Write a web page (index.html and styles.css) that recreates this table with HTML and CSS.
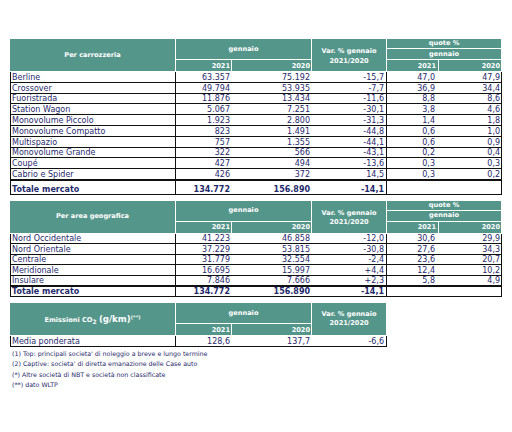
FILE: index.html
```html
<!DOCTYPE html>
<html>

<head>
  <meta name="viewport" content="width=device-width, initial-scale=1.0">
  <link rel="stylesheet" href="styles.css">
</head>

<body>
  <!-- Tabella 1: per carrozzeria -->
  <table class="tab tab1">
    <colgroup>
      <col class="c-lab"><col class="c-y1"><col class="c-y2"><col class="c-var"><col class="c-q1"><col class="c-q2">
    </colgroup>
    <thead>
      <tr class="h1">
        <th rowspan="3">Per carrozzeria</th>
        <th colspan="2" rowspan="2">gennaio</th>
        <th rowspan="3" class="hvar">Var. % gennaio<br>2021/2020</th>
        <th colspan="2">quote %</th>
      </tr>
      <tr class="h2">
        <th colspan="2">gennaio</th>
      </tr>
      <tr class="h3">
        <th class="yr">2021</th><th class="yr">2020</th><th class="yr q1">2021</th><th class="yr">2020</th>
      </tr>
    </thead>
    <tbody>
      <tr><td class="lab">Berline</td><td>63.357</td><td>75.192</td><td class="var">-15,7</td><td class="q1">47,0</td><td class="q2">47,9</td></tr>
      <tr><td class="lab">Crossover</td><td>49.794</td><td>53.935</td><td class="var">-7,7</td><td class="q1">36,9</td><td class="q2">34,4</td></tr>
      <tr><td class="lab">Fuoristrada</td><td>11.876</td><td>13.434</td><td class="var">-11,6</td><td class="q1">8,8</td><td class="q2">8,6</td></tr>
      <tr><td class="lab">Station Wagon</td><td>5.067</td><td>7.251</td><td class="var">-30,1</td><td class="q1">3,8</td><td class="q2">4,6</td></tr>
      <tr><td class="lab">Monovolume Piccolo</td><td>1.923</td><td>2.800</td><td class="var">-31,3</td><td class="q1">1,4</td><td class="q2">1,8</td></tr>
      <tr><td class="lab">Monovolume Compatto</td><td>823</td><td>1.491</td><td class="var">-44,8</td><td class="q1">0,6</td><td class="q2">1,0</td></tr>
      <tr><td class="lab">Multispazio</td><td>757</td><td>1.355</td><td class="var">-44,1</td><td class="q1">0,6</td><td class="q2">0,9</td></tr>
      <tr><td class="lab">Monovolume Grande</td><td>322</td><td>566</td><td class="var">-43,1</td><td class="q1">0,2</td><td class="q2">0,4</td></tr>
      <tr><td class="lab">Coupé</td><td>427</td><td>494</td><td class="var">-13,6</td><td class="q1">0,3</td><td class="q2">0,3</td></tr>
      <tr><td class="lab">Cabrio e Spider</td><td>426</td><td>372</td><td class="var">14,5</td><td class="q1">0,3</td><td class="q2">0,2</td></tr>
      <tr class="tot"><td class="lab">Totale mercato</td><td>134.772</td><td>156.890</td><td class="var">-14,1</td><td class="q1"></td><td class="q2"></td></tr>
    </tbody>
  </table>

  <!-- Tabella 2: per area geografica -->
  <table class="tab tab2">
    <colgroup>
      <col class="c-lab"><col class="c-y1"><col class="c-y2"><col class="c-var"><col class="c-q1"><col class="c-q2">
    </colgroup>
    <thead>
      <tr class="h1">
        <th rowspan="3">Per area geografica</th>
        <th colspan="2" rowspan="2">gennaio</th>
        <th rowspan="3" class="hvar">Var. % gennaio<br>2021/2020</th>
        <th colspan="2">quote %</th>
      </tr>
      <tr class="h2">
        <th colspan="2">gennaio</th>
      </tr>
      <tr class="h3">
        <th class="yr">2021</th><th class="yr">2020</th><th class="yr q1">2021</th><th class="yr">2020</th>
      </tr>
    </thead>
    <tbody>
      <tr><td class="lab">Nord Occidentale</td><td>41.223</td><td>46.858</td><td class="var">-12,0</td><td class="q1">30,6</td><td class="q2">29,9</td></tr>
      <tr><td class="lab">Nord Orientale</td><td>37.229</td><td>53.815</td><td class="var">-30,8</td><td class="q1">27,6</td><td class="q2">34,3</td></tr>
      <tr><td class="lab">Centrale</td><td>31.779</td><td>32.554</td><td class="var">-2,4</td><td class="q1">23,6</td><td class="q2">20,7</td></tr>
      <tr><td class="lab">Meridionale</td><td>16.695</td><td>15.997</td><td class="var">+4,4</td><td class="q1">12,4</td><td class="q2">10,2</td></tr>
      <tr><td class="lab">Insulare</td><td>7.846</td><td>7.666</td><td class="var">+2,3</td><td class="q1">5,8</td><td class="q2">4,9</td></tr>
      <tr class="tot"><td class="lab">Totale mercato</td><td>134.772</td><td>156.890</td><td class="var">-14,1</td><td class="q1"></td><td class="q2"></td></tr>
    </tbody>
  </table>

  <!-- Tabella 3: emissioni -->
  <table class="tab tab3">
    <colgroup>
      <col class="c-lab"><col class="c-y1"><col class="c-y2"><col class="c-var">
    </colgroup>
    <thead>
      <tr class="h12">
        <th rowspan="2">Emissioni CO<sub>2</sub> <span class="big">(g/km)</span><sup>(**)</sup></th>
        <th colspan="2">gennaio</th>
        <th rowspan="2" class="hvar">Var. % gennaio<br>2021/2020</th>
      </tr>
      <tr class="h3">
        <th class="yr">2021</th><th class="yr">2020</th>
      </tr>
    </thead>
    <tbody>
      <tr><td class="lab">Media ponderata</td><td>128,6</td><td>137,7</td><td class="var">-6,6</td></tr>
    </tbody>
  </table>

  <div class="notes">
    <p>(1) Top: principali societa' di noleggio a breve e lungo termine</p>
    <p>(2) Captive: societa' di diretta emanazione delle Case auto</p>
    <p>(*) Altre società di NBT e società non classificate</p>
    <p>(**) dato WLTP</p>
  </div>
</body>
</html>
```

FILE: styles.css
```css
/* Layout tabelle immatricolazioni */
body {
  margin: 0;
  padding: 39px 10px 0;
  background-color: #ffffff;
  font-family: "DejaVu Sans", Verdana, sans-serif;
  color: #1f2a6b;
}

.tab {
  border-collapse: separate;
  border-spacing: 0;
  table-layout: fixed;
  width: 492px;
}

.tab1 {
  margin-bottom: 6px;
}

.tab2 {
  margin-bottom: 6px;
}

.tab3 {
  width: 377px;
  margin-bottom: 2px;
}

.c-lab { width: 166px; }
.c-y1 { width: 56px; }
.c-y2 { width: 80px; }
.c-var { width: 75px; }
.c-q1 { width: 52px; }
.c-q2 { width: 63px; }

th {
  background-color: #55968b;
  color: #ffffff;
  font-size: 6.6px;
  font-weight: bold;
  line-height: 9px;
  padding: 0 2px;
  border-right: 1px solid #ffffff;
  border-bottom: 1px solid #ffffff;
  text-align: center;
  white-space: nowrap;
}

th.yr {
  text-align: right;
  padding-right: 1px;
  padding-top: 1px;
}

th.q1 {
  padding-right: 2px;
}

.hvar {
  line-height: 9.5px;
  padding-top: 3px;
}

.tab3 .hvar {
  padding-top: 0;
}

tr.h1 { height: 10px; }
tr.h2 { height: 11px; }
tr.h3 { height: 12px; }
tr.h12 { height: 21px; }

th sub {
  font-size: 6px;
  vertical-align: -2px;
}

th sup {
  font-size: 5px;
  vertical-align: 3px;
}

th .big {
  font-size: 8.6px;
}

.tab1 tbody tr {
  height: 10.8px;
}

.tab2 tbody tr,
.tab3 tbody tr {
  height: 10.5px;
}

td {
  font-size: 8px;
  line-height: 9px;
  padding: 0 2px;
  text-align: right;
  vertical-align: bottom;
  white-space: nowrap;
  border-bottom: 1px solid #111111;
}

td.lab {
  text-align: left;
  padding-left: 1px;
  border-left: 1px solid #111111;
  border-right: 1px solid #111111;
}

td.var,
td.q2 {
  border-right: 1px solid #111111;
}

td.q1 {
  padding-right: 4px;
}

td.q2 {
  padding-right: 1px;
}

.tab tbody tr.tot {
  height: 15px;
}

tr.tot td {
  font-weight: bold;
  border-top: 1px solid #111111;
}

.tab2 tbody tr.tot {
  height: 11px;
}

.notes {
  font-size: 6.3px;
  line-height: 10.4px;
}

.notes p {
  margin: 0;
  padding-left: 2px;
}
```
